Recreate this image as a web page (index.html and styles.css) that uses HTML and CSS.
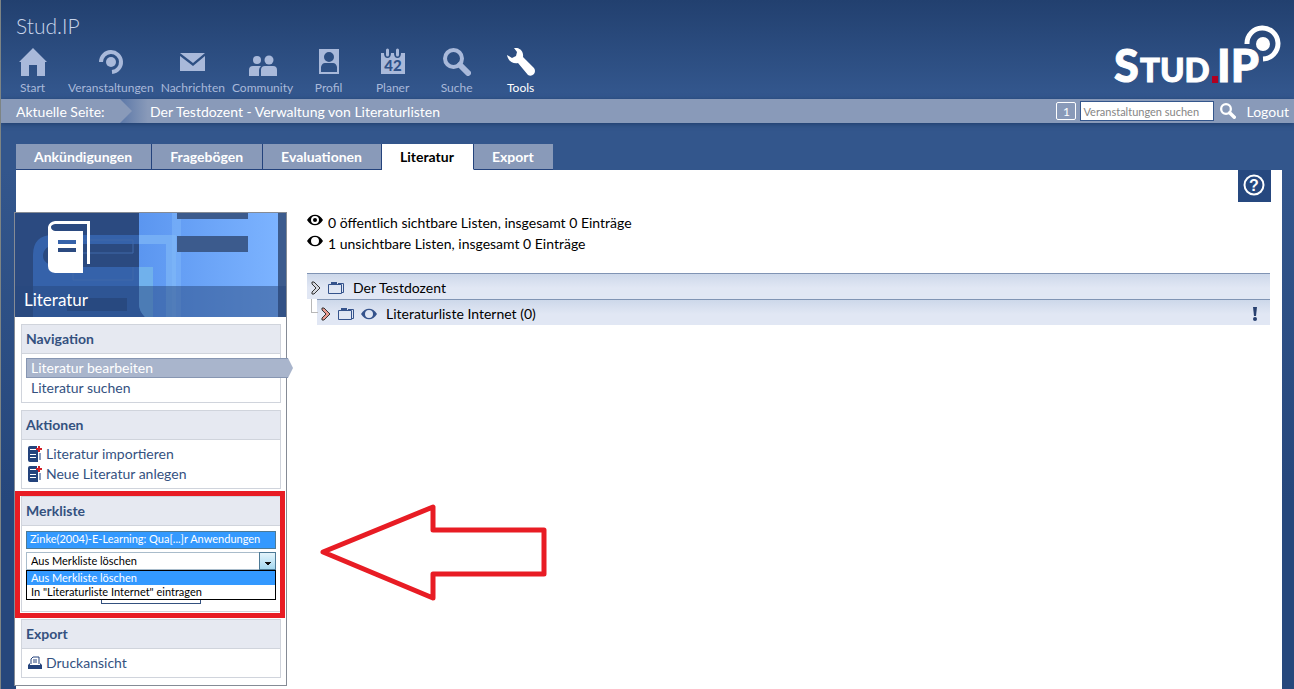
FILE: index.html
```
<!DOCTYPE html>
<html lang="de">
<head>
    <meta charset="UTF-8">
    <meta name="viewport" content="width=device-width, initial-scale=1.0">
    <title>Der Testdozent - Verwaltung von Literaturlisten</title>
    <link rel="stylesheet" href="styles.css">
</head>
<body>

<svg class="sprite" aria-hidden="true">
    <symbol id="icon-search" viewBox="0 0 28 28">
        <circle cx="10.500" cy="10.500" r="8.500" fill="none" stroke="currentColor" stroke-width="4"/>
        <path d="M17 17L25 25" stroke="currentColor" stroke-width="6" stroke-linecap="round"/>
    </symbol>
    <symbol id="icon-folder" viewBox="0 0 16 14">
        <path d="M0.500 3.500H13.500V12.500H0.500ZM13.500 11.500H15.500V2.500H10" fill="none" stroke="#35538c"/>
        <path d="M3 1H9V4H3Z" fill="#35538c"/>
    </symbol>
    <symbol id="icon-eye-empty" viewBox="0 0 16 12">
        <path fill="currentColor" fill-rule="evenodd" d="M0 6C4 -1 12 -1 16 6C12 13 4 13 0 6ZM8 2C5 2 4 4 4 6C4 8 5 10 8 10C11 10 12 8 12 6C12 4 11 2 8 2Z"/>
    </symbol>
    <symbol id="icon-arrow" viewBox="0 0 10 14">
        <path d="M1 1H3L9 7L3 13H1V11L5 7L1 3Z" fill="var(--arrow)" stroke="#333"/>
    </symbol>
    <symbol id="icon-book-add" viewBox="0 0 14 17">
        <path d="M0 2Q0 0 2 0H9V3H2V4H10V16H2Q0 16 0 14Z" fill="#24437c"/>
        <path d="M12 7V14" stroke="#8b9dbf" stroke-width="2"/>
        <path d="M2 8.500H8M2 11.500H8" stroke="#fff"/>
        <path d="M11 0V6M8 3H14" stroke="#d2232a" stroke-width="2"/>
    </symbol>
</svg>

<header class="header">
    <div class="header-top">
        <div class="header-left">
            <div class="site-name">Stud.IP</div>
            <nav class="main-nav">
                <a href="#">
                    <svg width="28" height="28" viewBox="0 0 28 28"><path fill="currentColor" d="M14 0L28 14H26V28H18V17H10V28H2V14H0Z"/></svg>
                    Start
                </a>
                <a href="#">
                    <svg width="28" height="28" viewBox="0 0 28 28"><circle cx="14" cy="14" r="5" fill="currentColor"/><path d="M4 14A10 10 0 1 1 15 24" fill="none" stroke="currentColor" stroke-width="4"/></svg>
                    Veranstaltungen
                </a>
                <a href="#">
                    <svg width="28" height="28" viewBox="0 0 28 28"><path fill="currentColor" d="M1 5H26L14 15ZM1 8L14 18L26 8V23H1Z"/></svg>
                    Nachrichten
                </a>
                <a href="#">
                    <svg width="28" height="28" viewBox="0 0 28 28"><g fill="currentColor"><circle cx="8" cy="12" r="4"/><circle cx="20" cy="12" r="4.500"/><path d="M0 28V22Q0 18 4 18H12Q10 20 10 22V28ZM12 28V22Q12 18 16 18H24Q28 18 28 22V28Z"/></g></svg>
                    Community
                </a>
                <a href="#">
                    <svg width="28" height="28" viewBox="0 0 28 28"><path fill="currentColor" fill-rule="evenodd" d="M4 1H24V26H4ZM14 4A5 5 0 1 0 14 14A5 5 0 1 0 14 4ZM6 24H22V19Q21 15 18 15H10Q7 15 6 19Z"/></svg>
                    Profil
                </a>
                <a href="#">
                    <svg width="28" height="28" viewBox="0 0 28 28"><path fill="currentColor" d="M2 5H5Q5 10 8.500 10Q12 10 12 5H15Q15 10 18.500 10Q22 10 22 5H26V26H2Z"/><path d="M8.500 2V7M18.500 2V7" stroke="currentColor" stroke-width="3" stroke-linecap="round"/><text class="icon-day" x="14" y="23" text-anchor="middle">42</text></svg>
                    Planer
                </a>
                <a href="#">
                    <svg width="28" height="28"><use href="#icon-search"/></svg>
                    Suche
                </a>
                <a href="#" class="active">
                    <svg width="28" height="28" viewBox="0 0 28 28"><path fill="currentColor" d="M7 0C12 -1 17 3 16 9L27 20Q29 23 27 26Q24 29 21 27L11 15C6 16 1 13 0 7L5 10L9 8L10 4Z"/></svg>
                    Tools
                </a>
            </nav>
        </div>
        <svg class="logo" width="172" height="76" viewBox="0 0 172 76" role="img" aria-label="Stud.IP">
            <text x="4" y="60" class="logo-big">S</text>
            <text x="30" y="60" class="logo-small">TUD</text>
            <rect x="102" y="54" width="6" height="7" fill="#b00020"/>
            <text x="107" y="60" class="logo-big">IP</text>
            <circle cx="153" cy="22" r="7" fill="#fff"/>
            <path d="M137 22A15.500 15.500 0 1 1 153 37" fill="none" stroke="#fff" stroke-width="5"/>
        </svg>
    </div>
    <div class="location-bar">
        <span class="location-label">Aktuelle Seite:</span>
        <span class="location-page">Der Testdozent - Verwaltung von Literaturlisten</span>
        <form class="quick-search">
            <button type="button" class="counter">1</button>
            <input type="text" aria-label="Veranstaltungen suchen" placeholder="Veranstaltungen suchen">
            <button type="button" class="search-btn" aria-label="Suchen"><svg width="16" height="16"><use href="#icon-search"/></svg></button>
            <a href="#">Logout</a>
        </form>
    </div>
</header>

<nav class="tabs">
    <a href="#">Ankündigungen</a>
    <a href="#">Fragebögen</a>
    <a href="#">Evaluationen</a>
    <a href="#" class="active">Literatur</a>
    <a href="#">Export</a>
</nav>

<div class="page">
    <button type="button" class="help" aria-label="Hilfe">
        <svg width="22" height="22" viewBox="0 0 22 22"><circle cx="11" cy="11" r="9.500" fill="none" stroke="#fff" stroke-width="2"/><text class="help-mark" x="11" y="17" text-anchor="middle">?</text></svg>
    </button>

    <aside class="sidebar">
        <div class="sidebar-image">
            <svg class="sidebar-art" viewBox="0 0 271 104" preserveAspectRatio="none" aria-hidden="true">
                <defs>
                    <linearGradient id="sky"><stop offset="0" stop-color="#5b96f0"/><stop offset="1" stop-color="#7cb3ff"/></linearGradient>
                </defs>
                <rect width="271" height="104" fill="#2b4a80"/>
                <path d="M18 104V42Q18 22 38 22H160V104Z" fill="#3562aa"/>
                <path d="M42 31H124V54H42Q28 51 28 43Q28 33 42 31Z" fill="#2b4a80"/>
                <path d="M124 0H263V104H130Q124 98 124 91Z" fill="url(#sky)"/>
                <path d="M124 22H161V104H151V31H124Z" fill="#75aef5"/>
                <path d="M124 54H138V104H130Q124 98 124 91Z" fill="#70b1ec"/>
                <path d="M157 0H166V104H157Z" fill="#80b8fa" opacity="0.500"/>
                <path d="M162 0H233V6H162ZM162 23H233V39H162Z" fill="#3c5b8d"/>
                <path d="M263 0H271V104H263Z" fill="#3c5b8d"/>
                <path d="M50 27H118V40H58M58 54V67H118V54" fill="none" stroke="#4069a9"/>
                <path d="M52 85H112V98H52Z" fill="#284a83"/>
            </svg>
            <svg class="sidebar-icon" width="42" height="52" viewBox="0 0 42 52" aria-hidden="true">
                <path fill="#fff" fill-rule="evenodd" d="M7 0H42V43H39V3H7Q3 4 3 6Q3 9 7 10H35V52H7Q0 51 0 45V6Q1 1 7 0ZM10 19V23H28V19ZM10 27V31H28V27Z"/>
            </svg>
            <div class="sidebar-title">Literatur</div>
        </div>

        <section class="widget">
            <h2>Navigation</h2>
            <div class="widget-body">
                <a href="#" class="current">Literatur bearbeiten</a>
                <a href="#">Literatur suchen</a>
            </div>
        </section>

        <section class="widget">
            <h2>Aktionen</h2>
            <div class="widget-body with-icons">
                <a href="#"><svg width="14" height="17"><use href="#icon-book-add"/></svg>Literatur importieren</a>
                <a href="#"><svg width="14" height="17"><use href="#icon-book-add"/></svg>Neue Literatur anlegen</a>
            </div>
        </section>

        <section class="widget marked">
            <h2>Merkliste</h2>
            <form class="widget-body clipboard">
                <select class="clip-list" size="2" aria-label="Merkliste">
                    <option selected>Zinke(2004)-E-Learning: Qua[...]r Anwendungen</option>
                </select>
                <div class="dropdown">
                    <select class="clip-action" aria-label="Aktion">
                        <option>Aus Merkliste löschen</option>
                        <option>In "Literaturliste Internet" eintragen</option>
                    </select>
                    <ul class="dropdown-menu">
                        <li class="selected">Aus Merkliste löschen</li>
                        <li>In "Literaturliste Internet" eintragen</li>
                    </ul>
                </div>
                <button type="button" class="clip-submit" aria-label="Ausführen"></button>
            </form>
            <svg class="pointer" width="228" height="98" viewBox="0 0 228 98" aria-hidden="true">
                <path d="M3 49L113 4V27H224V71H113V95Z" fill="none" stroke="#e81c24" stroke-width="5" stroke-linejoin="round"/>
            </svg>
        </section>

        <section class="widget">
            <h2>Export</h2>
            <div class="widget-body with-icons">
                <a href="#"><svg width="14" height="14" viewBox="0 0 14 14"><path d="M3 8V3L5 1H11V8" fill="#fff" stroke="#24437c"/><path d="M5 4H9M5 6H9" stroke="#24437c"/><path d="M0 9L2 7V9H12V7L14 9V13H0Z" fill="#24437c"/></svg>Druckansicht</a>
            </div>
        </section>
    </aside>

    <main class="content">
        <p><svg width="16" height="12" viewBox="0 0 16 12"><use href="#icon-eye-empty"/><circle cx="8" cy="6" r="2"/></svg>0 öffentlich sichtbare Listen, insgesamt 0 Einträge</p>
        <p><svg width="16" height="12"><use href="#icon-eye-empty"/></svg>1 unsichtbare Listen, insgesamt 0 Einträge</p>

        <div class="tree">
            <div class="tree-row">
                <svg class="arrow" width="10" height="14"><use href="#icon-arrow"/></svg>
                <svg width="16" height="14"><use href="#icon-folder"/></svg>
                <a href="#">Der Testdozent</a>
            </div>
            <div class="tree-child">
                <div class="tree-row">
                    <svg class="arrow red" width="10" height="14"><use href="#icon-arrow"/></svg>
                    <svg width="16" height="14"><use href="#icon-folder"/></svg>
                    <svg class="eye" width="16" height="12"><use href="#icon-eye-empty"/></svg>
                    <a href="#">Literaturliste Internet (0)</a>
                    <svg class="notice" width="4" height="14" viewBox="0 0 4 14"><path d="M0 0H4L3 9H1Z" fill="#28406f"/><circle cx="2" cy="12" r="2" fill="#28406f"/></svg>
                </div>
            </div>
        </div>
    </main>
</div>

</body>
</html>
```
FILE: styles.css
```
* {
    box-sizing: border-box;
}
body {
    margin: 0;
    min-height: 100vh;
    display: flex;
    flex-direction: column;
    font-family: Lato, sans-serif;
    font-size: 14px;
    line-height: 20px;
    color: #000;
    background: linear-gradient(#33568c 170px, #26477c 500px);
    border-left: 1px solid #7d8484;
}
a {
    color: inherit;
    text-decoration: none;
}
svg {
    flex: none;
}
.sprite {
    position: absolute;
    width: 0;
    height: 0;
}
.header-top {
    display: flex;
    justify-content: space-between;
    height: 99px;
    background: linear-gradient(#22406f, #34588f);
}
.site-name {
    padding: 13px 0 0 15px;
    font-size: 21px;
    font-weight: 300;
    line-height: 25px;
    color: #c9d5ea;
}
.main-nav {
    display: flex;
    padding-top: 10px;
}
.main-nav a {
    display: flex;
    flex-direction: column;
    align-items: center;
    gap: 2px;
    min-width: 64px;
    padding: 0 4px 0 3px;
    font-size: 12px;
    color: #a9b9da;
}
.main-nav a.active {
    color: #fff;
}
.icon-day {
    font-size: 15px;
    font-weight: 900;
    fill: #2f5289;
}
.logo {
    margin: 22px 12px 0 0;
    overflow: visible;
}
.logo text {
    fill: #fff;
    stroke: #fff;
    stroke-width: 1px;
    font-weight: 900;
}
.logo-big {
    font-size: 45px;
}
.logo-small {
    font-size: 33px;
}
.location-bar {
    display: flex;
    height: 24px;
    line-height: 25px;
    background: #899ab9;
    color: #fff;
    box-shadow: 0 1px 5px #1f3c6a;
}
.location-label {
    width: 119px;
    padding-left: 15px;
    background: #899ab9;
    position: relative;
}
.location-label::after {
    content: "";
    position: absolute;
    left: 100%;
    top: 0;
    border: 12px solid transparent;
    border-left-color: #899ab9;
    border-right: 0;
}
.location-page {
    flex: 1;
    padding-left: 30px;
    background: linear-gradient(90deg, #5c78a8, #899ab9 28px);
}
.quick-search {
    display: flex;
    align-items: center;
    padding-right: 5px;
}
.counter {
    width: 20px;
    height: 18px;
    margin-right: 4px;
    padding: 0;
    border: 1px solid #fff;
    border-radius: 2px;
    background: none;
    color: #fff;
    font: 12px Lato, sans-serif;
}
.quick-search input {
    width: 134px;
    height: 20px;
    padding: 0 2px;
    border: 1px solid #34568c;
    background: #fff;
    font: 11px Lato, sans-serif;
}
.quick-search input::placeholder {
    color: #858585;
}
.search-btn {
    display: flex;
    margin: 0 10px 0 6px;
    padding: 0;
    border: 0;
    background: none;
    color: #fff;
}
.tabs {
    display: flex;
    gap: 1px;
    margin: 21px 0 0 15px;
}
.tabs a {
    height: 26px;
    padding: 0 19px 0 18px;
    line-height: 26px;
    font-weight: bold;
    color: #fff;
    background: #899ab9;
    border-bottom: 1px solid #24437c;
    border-right: 1px solid #24437c;
}
.tabs {
    gap: 0;
}
.tabs a:last-child {
    border-right: 0;
}
.tabs a.active {
    color: #000;
    background: #fff;
    border-bottom-color: #fff;
}
.page {
    flex: 1;
    display: flex;
    align-items: flex-start;
    position: relative;
    margin: 0 12px 0 15px;
    padding-top: 42px;
    background: #fff;
}
.help {
    position: absolute;
    top: 0;
    right: 11px;
    display: flex;
    justify-content: center;
    width: 33px;
    height: 32px;
    padding: 4px 1px 0 0;
    border: 0;
    background: #26487f;
}
.help-mark {
    font-size: 16px;
    font-weight: 900;
    fill: #fff;
}
.sidebar {
    flex: none;
    width: 273px;
    margin: 0 20px 3px -2px;
    padding-bottom: 7px;
    border: 1px solid #858b95;
    background: #fff;
}
.sidebar-image {
    position: relative;
    height: 104px;
    display: flex;
    flex-direction: column;
    justify-content: flex-end;
}
.sidebar-art {
    position: absolute;
    width: 100%;
    height: 100%;
}
.sidebar-icon {
    position: absolute;
    left: 33px;
    top: 8px;
}
.sidebar-title {
    position: relative;
    height: 31px;
    padding-left: 9px;
    font-size: 17px;
    line-height: 27px;
    color: #fff;
    background: rgba(40, 72, 125, 0.5);
}
.widget {
    position: relative;
    margin: 7px 5px 0 6px;
    border: 1px solid #d0d4dc;
}
.widget h2 {
    margin: 0;
    padding: 0 4px;
    font-size: 14px;
    line-height: 28px;
    color: #34517f;
    background: #e6e9f1;
    border-bottom: 1px solid #d0d4dc;
}
.widget-body {
    padding: 4px;
    color: #34517f;
}
.widget-body a {
    display: block;
    padding: 0 5px;
}
.widget-body .current {
    position: relative;
    width: 262px;
    height: 20px;
    line-height: 18px;
    padding: 0 4px;
    color: #fff;
    background: #a9b5cc;
    border: 1px solid #8796b2;
    border-right: 0;
}
.current::after {
    content: "";
    position: absolute;
    left: 100%;
    top: -1px;
    border: 10px solid transparent;
    border-left: 5px solid #a9b5cc;
    border-right: 0;
}
.with-icons a {
    display: flex;
    align-items: center;
    gap: 4px;
    padding: 0 2px;
}
.marked::after {
    content: "";
    position: absolute;
    inset: -6px -5px -7px -7px;
    border: 5px solid #e81c24;
    pointer-events: none;
}
.pointer {
    position: absolute;
    left: 298px;
    top: 6px;
    z-index: 1;
}
.clipboard {
    display: flex;
    flex-direction: column;
    gap: 3px;
    padding-top: 5px;
}
.clip-list {
    width: 250px;
    height: 18px;
    padding: 0;
    border: 1px solid #4d7a96;
    border-radius: 0;
    overflow: hidden;
    font: 11px Lato, sans-serif;
    scrollbar-width: none;
}
.clip-list option {
    height: 16px;
    padding: 0 3px;
    line-height: 16px;
}
.clip-list option:checked {
    color: #fff;
    background: linear-gradient(#3399ff, #3399ff);
}
.dropdown {
    position: relative;
    width: 250px;
}
/* arrow button of the select */
.dropdown::after {
    content: "";
    position: absolute;
    right: 1px;
    top: 1px;
    width: 15px;
    height: 16px;
    background:
        linear-gradient(135deg, #111 50%, transparent 0) 8px 9px / 4px 4px no-repeat,
        linear-gradient(225deg, #111 50%, transparent 0) 4px 9px / 4px 4px no-repeat,
        linear-gradient(#e4f4fb, #a5d8f0);
    box-shadow: 0 0 0 1px #4d7a96;
    pointer-events: none;
}
.clip-action {
    display: block;
    width: 100%;
    height: 18px;
    padding: 0 4px 1px;
    appearance: none;
    border: 1px solid #a9bccb;
    border-radius: 0;
    background: #fff;
    color: #000;
    font: 11px Lato, sans-serif;
}
.dropdown-menu {
    position: absolute;
    top: 18px;
    left: 0;
    right: 0;
    margin: 0;
    padding: 0;
    list-style: none;
    font-size: 11px;
    line-height: 14px;
    color: #000;
    background: #fff;
    border: 1px solid #000;
    z-index: 1;
}
.dropdown-menu li {
    padding: 0 4px;
}
.dropdown-menu .selected {
    color: #fff;
    background: #3399ff;
}
.clip-submit {
    align-self: center;
    width: 100px;
    height: 24px;
    margin: 7px 0 3px;
    border: 1px solid #34517f;
    background: #fff;
}
.content {
    flex: 1;
    padding: 1px 12px 0 0;
}
.content p {
    display: flex;
    gap: 5px;
    margin: 0 0 1px;
}
.content p svg {
    margin-top: 1px;
}
.tree {
    margin-top: 19px;
}
.tree-row {
    display: flex;
    align-items: center;
    gap: 7px;
    height: 26px;
    padding: 2px 13px 0 4px;
    border-top: 1px solid #8094b4;
    background: linear-gradient(#cdd8ea, #e1e7f4 14px);
}
.tree-row a {
    margin-left: 2px;
}
.tree-child {
    padding-left: 10px;
    position: relative;
}
.tree-child::before {
    content: "";
    position: absolute;
    left: 4px;
    top: 0;
    width: 6px;
    height: 13px;
    border: 1px solid #b8b8b8;
    border-width: 0 0 1px 1px;
}
.arrow {
    --arrow: #d5d8e0;
}
.arrow.red {
    --arrow: #e79a8f;
}
.eye {
    color: #35538c;
}
.notice {
    margin-left: auto;
}
```
